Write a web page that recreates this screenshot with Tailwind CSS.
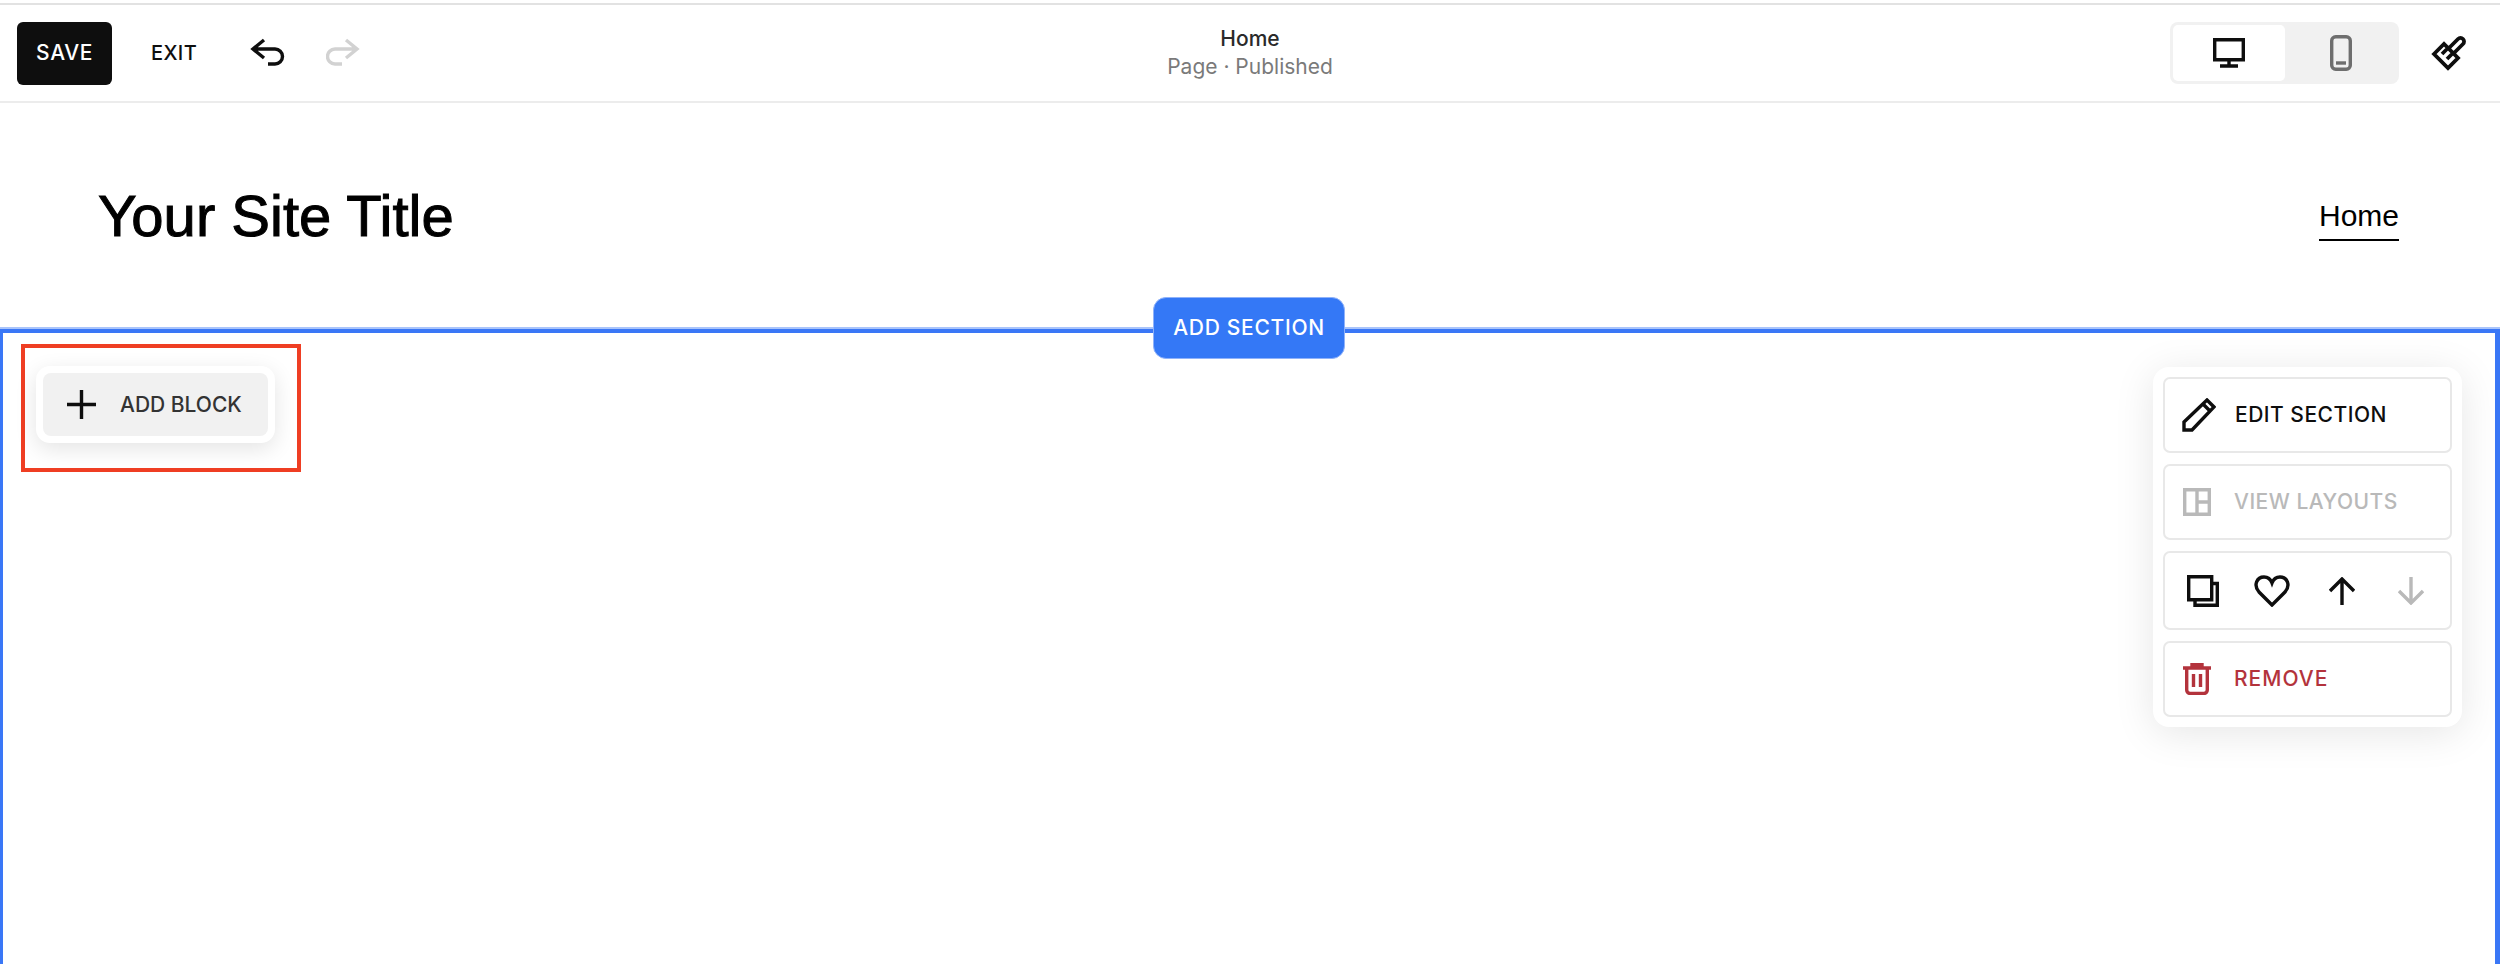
<!DOCTYPE html>
<html lang="en">
<head>
    <meta charset="UTF-8">
    <title>Add Block</title>
    <script src="https://cdn.jsdelivr.net/npm/@tailwindcss/browser@4"></script>
</head>
<body class="bg-white h-[964px] overflow-hidden font-['Inter',sans-serif] text-[#0e0e0e]">

    <!-- Editor toolbar -->
    <header class="h-[100px] mt-[3px] border-t-2 border-b-2 border-t-[#e2e2e2] border-b-[#ececec] grid grid-cols-[1fr_auto_1fr] items-center">
        <div class="flex items-center pl-[17px]">
            <button class="w-[95px] h-[63px] rounded-[6px] bg-[#0e0e0e] text-white text-[21px] font-medium tracking-[0.6px]">SAVE</button>
            <span class="ml-[39px] text-[20px] font-medium tracking-[0.4px]">EXIT</span>
            <svg class="ml-[53px]" width="36" height="30" viewBox="0 0 36 30" fill="none" stroke="#0e0e0e" stroke-width="3.4">
                <path d="M14 2 3 11l11 9M3 11h22a7.500 7.500 0 0 1 0 15h-7"/>
            </svg>
            <svg class="ml-[40px]" width="36" height="30" viewBox="0 0 36 30" fill="none" stroke="#d2d2d2" stroke-width="3.4">
                <path d="M20 2l11 9-11 9M31 11H9a7.500 7.500 0 0 0 0 15h7"/>
            </svg>
        </div>
        <div class="text-center">
            <div class="text-[21px] leading-[28px] font-medium text-[#2a2a2a]">Home</div>
            <div class="text-[21px] leading-[28px] text-[#7a7a7a]">Page · Published</div>
        </div>
        <div class="flex items-center justify-end pr-[33px]">
            <div class="w-[229px] h-[62px] rounded-[8px] bg-[#f1f1f1] p-[3px] flex">
                <div class="w-[112px] rounded-[5px] bg-white flex items-center justify-center">
                    <svg width="32" height="30" viewBox="0 0 32 30" fill="none" stroke="#0e0e0e" stroke-width="3.4">
                        <path d="M1.700 1.700h28.600v20H1.700zM16 22v5M7 28h18"/>
                    </svg>
                </div>
                <div class="flex-1 flex items-center justify-center">
                    <svg width="22" height="36" viewBox="0 0 22 36" fill="none" stroke="#6e6e6e" stroke-width="3.4">
                        <rect x="1.700" y="1.700" width="18.600" height="32.600" rx="4"/>
                        <path d="M6 28h10"/>
                    </svg>
                </div>
            </div>
            <svg class="ml-[32px]" width="36" height="36" viewBox="0 0 36 36" fill="none" stroke="#0e0e0e" stroke-width="3.8">
                <path d="M3 19 13 9l14 14-10 10ZM18 13l9-9a3.500 3.500 0 0 1 5 5l-9 9M17 13l-6 6M22 18l-6 6"/>
            </svg>
        </div>
    </header>

    <!-- Site header -->
    <div class="h-[226px] flex items-center justify-between pl-[98px] pr-[101px] font-['Liberation_Sans',sans-serif] text-black">
        <h1 class="text-[58px] leading-none [-webkit-text-stroke:1px_black]">Your Site Title</h1>
        <a class="text-[30px] leading-[36px] pb-[5px] border-b-2 border-black mt-[7px]">Home</a>
    </div>

    <!-- Selected section -->
    <section class="relative h-[635px] border-t-4 border-l-[3px] border-r-[5px] border-b-0 border-[#3a77f6] shadow-[0_-2px_0_#a9c4fb]">

        <button class="absolute left-[1150px] top-[-36px] w-[192px] h-[62px] rounded-[13px] border border-[#8fb2fa] bg-[#3478f6] text-white text-[21px] font-medium tracking-[0.7px]">ADD SECTION</button>

        <!-- Add block -->
        <div class="absolute left-[18px] top-[11px] w-[280px] h-[128px] border-4 border-[#ef3e23] pt-[18px] pl-[11px]">
            <div class="w-[239px] h-[77px] rounded-[14px] bg-white p-[7px] shadow-[0_6px_22px_rgba(0,0,0,0.11)]">
                <div class="h-full rounded-[8px] bg-[#f1f1f1] flex items-center pl-[24px]">
                    <svg width="29" height="29" viewBox="0 0 29 29" fill="none" stroke="#0e0e0e" stroke-width="3.4">
                        <path d="M14.500 0v29M0 14.500h29"/>
                    </svg>
                    <span class="ml-[24px] text-[21px] font-medium text-[#333333]">ADD BLOCK</span>
                </div>
            </div>
        </div>

        <!-- Section actions -->
        <div class="absolute left-[2150px] top-[34px] w-[309px] rounded-[16px] bg-white p-[10px] flex flex-col gap-[11px] shadow-[0_6px_40px_rgba(0,0,0,0.1)]">
            <div class="h-[76px] rounded-[7px] border-2 border-[#e8e8e8] flex items-center pl-[17px]">
                <svg width="34" height="34" viewBox="0 0 34 34" fill="none" stroke="#0e0e0e" stroke-width="3.4">
                    <path d="M2 32v-8L25 2l7 7-22 23ZM21 6l7 7"/>
                </svg>
                <span class="ml-[19px] text-[21px] font-medium tracking-[0.5px]">EDIT SECTION</span>
            </div>
            <div class="h-[76px] rounded-[7px] border-2 border-[#e8e8e8] flex items-center pl-[18px]">
                <svg width="28" height="28" viewBox="0 0 28 28" fill="none" stroke="#b9b9b9" stroke-width="3.400">
                    <path d="M1.700 1.700h24.600v24.600H1.700zM14 2v24M14 14h12"/>
                </svg>
                <span class="ml-[23px] text-[21px] font-medium tracking-[0.5px] text-[#b9b9b9]">VIEW LAYOUTS</span>
            </div>
            <div class="h-[79px] rounded-[7px] border-2 border-[#e8e8e8] flex items-center pl-[3px]">
                <div class="w-[69.5px] flex justify-center">
                    <svg width="32" height="32" viewBox="0 0 32 32" fill="none" stroke="#0e0e0e" stroke-width="3.4">
                        <path d="M1.700 1.700h23v23h-23zM25 8.500h5.300v21.800H8v-6"/>
                    </svg>
                </div>
                <div class="w-[69.5px] flex justify-center">
                    <svg width="36" height="32" viewBox="0 0 36 32" fill="none" stroke="#0e0e0e" stroke-width="3.4">
                        <path d="M18 30 5 17C-1 10 3 2 10 2c4 0 6.500 2 8 6 1.500-4 4-6 8-6 7 0 11 8 5 15Z"/>
                    </svg>
                </div>
                <div class="w-[69.5px] flex justify-center">
                    <svg width="26" height="28" viewBox="0 0 26 28" fill="none" stroke="#0e0e0e" stroke-width="3.4">
                        <path d="M13 28V2M1 14 13 2l12 12"/>
                    </svg>
                </div>
                <div class="w-[69.5px] flex justify-center">
                    <svg width="26" height="28" viewBox="0 0 26 28" fill="none" stroke="#b9b9b9" stroke-width="3.4">
                        <path d="M13 0v26M1 14l12 12 12-12"/>
                    </svg>
                </div>
            </div>
            <div class="h-[76px] rounded-[7px] border-2 border-[#e8e8e8] flex items-center pl-[18px] text-[#b3333c]">
                <svg width="28" height="32" viewBox="0 0 28 32" fill="none" stroke="currentColor" stroke-width="3.400">
                    <path d="M0 5h28M9 3.500V1.700h10v1.800M3.700 5v22a3.500 3.500 0 0 0 3.500 3.500h13.600a3.500 3.500 0 0 0 3.500-3.500V5M10.500 11v13M17.500 11v13"/>
                </svg>
                <span class="ml-[23px] text-[21px] font-medium tracking-[1px]">REMOVE</span>
            </div>
        </div>
    </section>

</body>
</html>
